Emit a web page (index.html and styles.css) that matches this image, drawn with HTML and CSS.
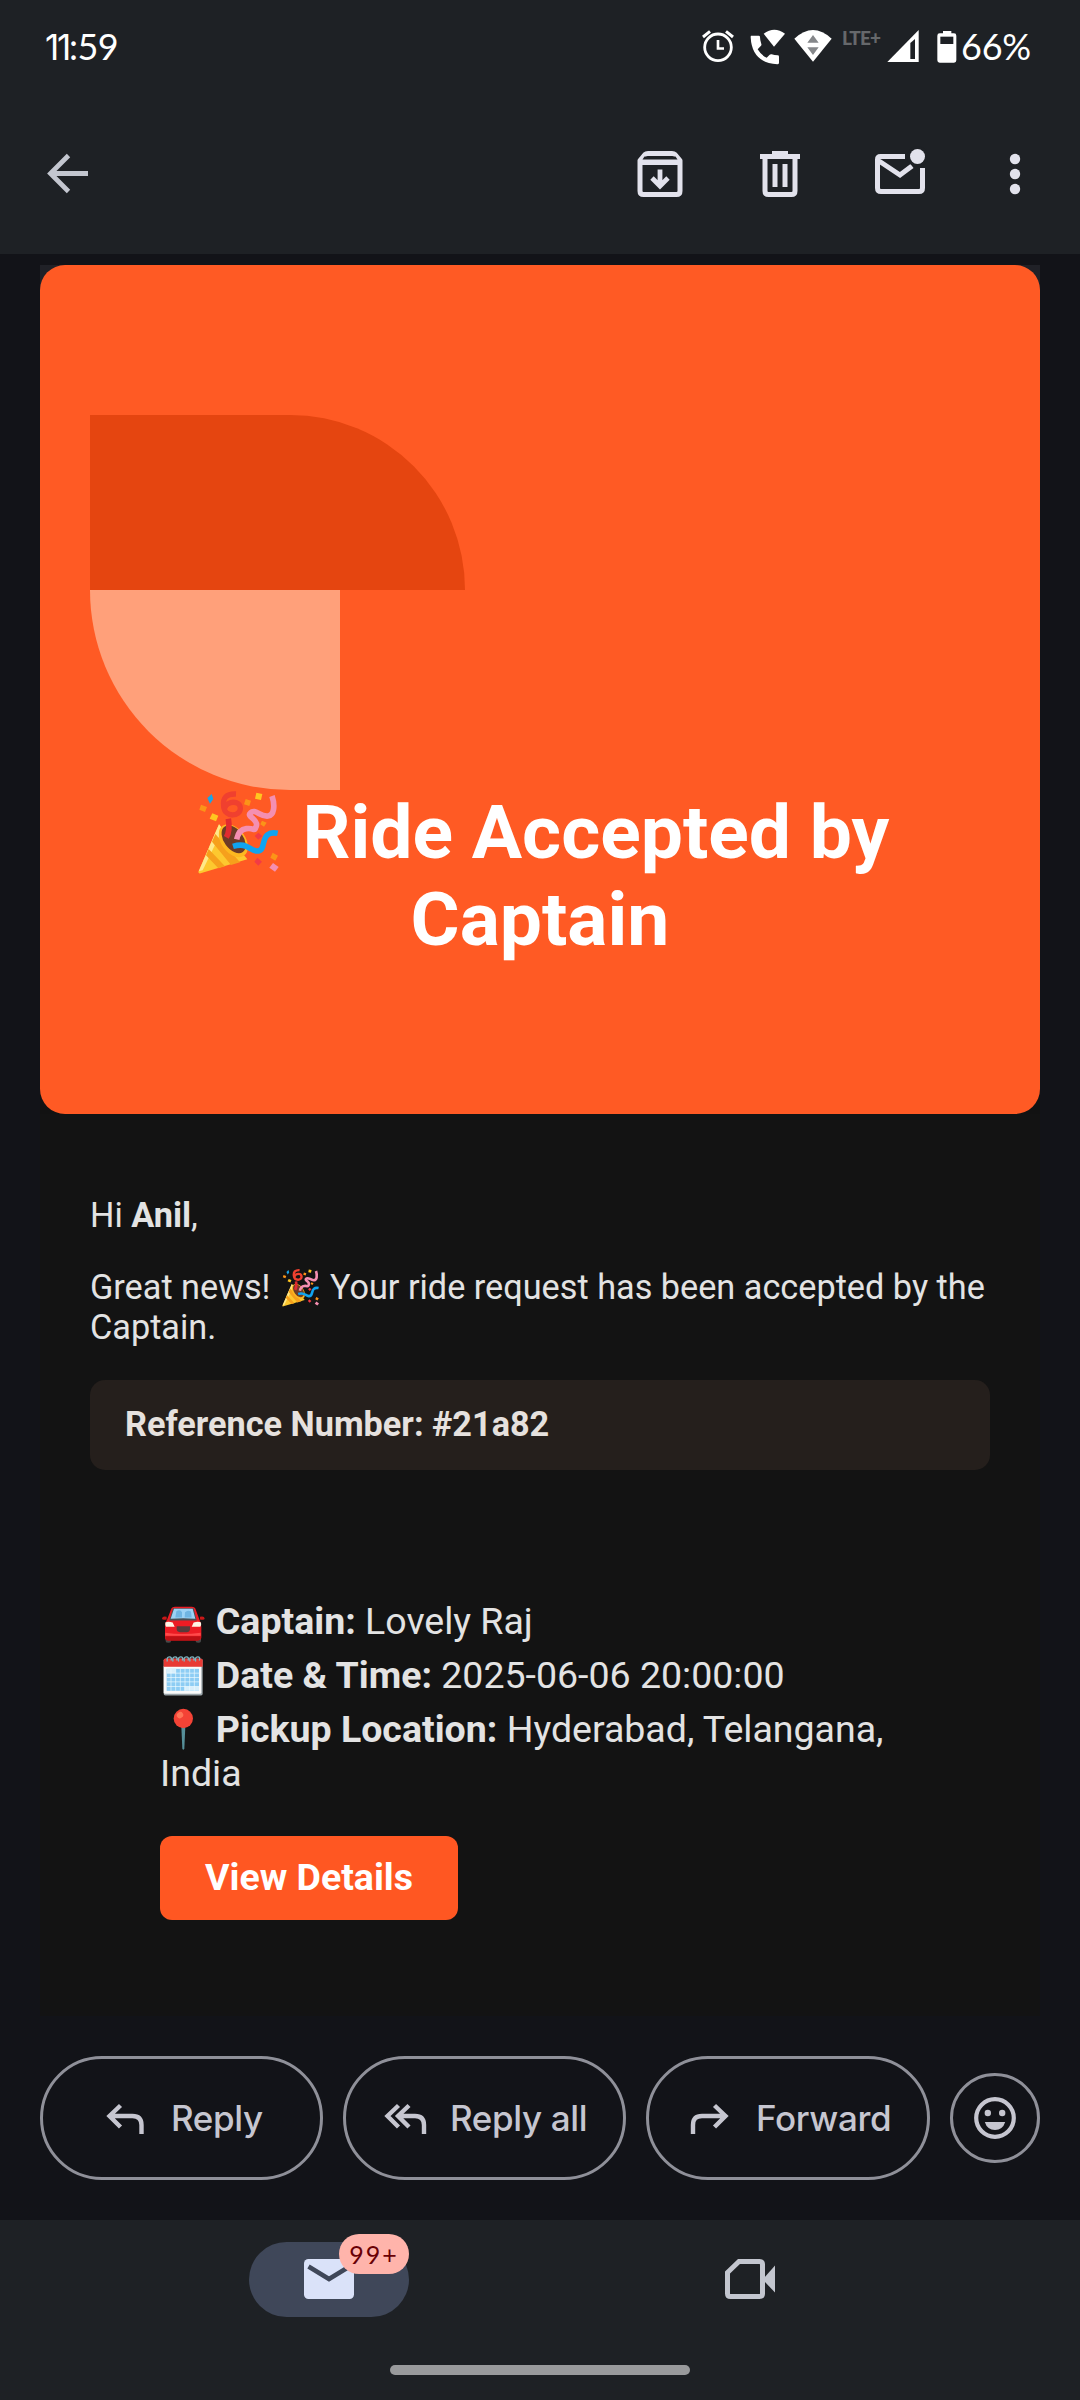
FILE: index.html
```html
<!DOCTYPE html>
<html lang="en">
<head>
<meta charset="utf-8">
<title>Ride Accepted by Captain</title>
<link rel="stylesheet" href="styles.css">
</head>
<body>
<svg class="defs" width="0" height="0" aria-hidden="true">
  <symbol id="party" viewBox="0 15 279 279">
    <path d="M84 133L23 274q-3 8 6 6l140-42z" fill="#fdc82f"/>
    <path d="M84 133L23 274l12-3 60-124z" fill="#ffe88a"/>
    <path d="M73 162l-10 23 57 70 27-8zM53 207l-8 19 37 39 20-6z" fill="#f6a01c"/>
    <ellipse cx="127" cy="182" rx="36" ry="55" transform="rotate(-36 127 182)" fill="#fdb820"/>
    <ellipse cx="128" cy="178" rx="29" ry="47" transform="rotate(-36 128 178)" fill="#6d3b26"/>
    <path d="M106 172q12-20 6-56" fill="none" stroke="#e02b30" stroke-width="17"/>
    <path d="M135 42q-43-2-37 38c4 35 51 30 50 4-1-24-39-22-47 0" fill="none" stroke="#f0402f" stroke-width="16"/>
    <path d="M137 178q6-29 29-32c27-3 23 11 30-8 7-20-30-28-18-39 15-15 29 12 53 9 18-2 22-30 12-60" fill="none" stroke="#f48fb1" stroke-width="17"/>
    <path d="M126 199c42-13 47 11 70 14 28 2 15-35 34-49q11-8 30-4" fill="none" stroke="#10a4f0" stroke-width="17"/>
    <path d="M49 54l13-12 5 15-10 14z" fill="#1aa5e8"/>
    <g fill="#ffc620"><path d="M64 100l18 7-7 17-19-8zM196 38l18 4-4 18-18-4z"/></g>
    <g fill="#fb9418"><path d="M30 74l18 7-6 15-17-7zM164 57l16 5-5 16-16-5zM213 122l14 6-8 12-11-7zM245 218l16 9-8 15-15-9z"/></g>
    <g fill="#f23b45"><path d="M202 158l12 10-12 11-11-11zM199 233l14 12-11 12-12-12z"/></g>
    <path d="M246 249l17 12-11 14-17-12z" fill="#f48fb1"/>
  </symbol>
  <symbol id="car" viewBox="15 21.5 139.5 139.5">
    <path d="M31 139h17v12q0 5-8 5t-8-5zM121 139h17v12q-1 5-8 5t-8-5z" fill="#484848"/>
    <path d="M21 83q1-8 14-5v8q-14 3-14-3zM149 83q-1-8-14-5v8q14 3 14-3z" fill="#c91818"/>
    <path d="M48 56q2-8 12-8h50q10 0 12 8l12 32q5 7 5 21v30q0 9-10 9H39q-9 0-9-9v-31q0-14 6-21z" fill="#ec1c24"/>
    <path d="M54 52h62l9 37H43z" fill="#4a5156"/>
    <path d="M57 54h56l8 30q-36-4-74 0z" fill="#9bd2f5"/>
    <path d="M64 61q12-6 17 3v16H61zM90 64q8-8 18-2l2 18H89z" fill="#6fb5e2"/>
    <path d="M31 95q8-5 22 0l6 13H33q-3-2-2-13zM138 95q-8-5-22 0l-6 13h26q4-3 2-13z" fill="#fff4e4"/>
    <path d="M65 106h40v9q-1 9-10 9H75q-10 0-10-10z" fill="#573b3b"/>
    <path d="M31 126q50 7 106 0v9H31z" fill="#ff4a4a"/>
    <path d="M31 136h106v8q-4 6-9 6H40q-8 0-9-6z" fill="#bd1015"/>
  </symbol>
  <symbol id="calendar" viewBox="15 183.5 139.5 139.5">
    <rect x="26" y="204" width="117" height="110" rx="5" fill="#9ba5aa"/>
    <path d="M26 226h113v78q0 5-5 5H31q-5 0-5-5z" fill="#fafafa"/>
    <path d="M26 228v-20q0-5 5-5h106q6 0 6 5v20z" fill="#e83a34"/>
    <rect x="35" y="234" width="97" height="66" fill="#8dcdf4"/>
    <path d="M35 234h27v13H35zM88 287h44v13H88z" fill="#d8effb"/>
    <path d="M48 234v66M62 234v66M76 234v66M90 234v66M104 234v66M118 234v66M35 247h97M35 260h97M35 273h97M35 287h97" stroke="#eefaff" stroke-width="2"/>
    <path d="M37 212q-3-14 6-14t5 11M54 212q-3-14 6-14t5 11M71 212q-3-14 6-14t5 11M88 212q-3-14 6-14t5 11M105 212q-3-14 6-14t5 11M122 212q-3-14 6-14t5 11" fill="none" stroke="#7fb5c2" stroke-width="4"/>
  </symbol>
  <symbol id="pin" viewBox="15 346.5 139.5 139.5">
    <path d="M79 408h12l-3 66q-3 8-6 0z" fill="#568f99"/>
    <circle cx="85" cy="384" r="29" fill="#f44336"/>
    <ellipse cx="75" cy="374" rx="10" ry="9" transform="rotate(-35 75 374)" fill="#ff7558"/>
  </symbol>
</svg>

<header class="top">
  <div class="status">
    <span class="clock"><span class="hour">11</span>:59</span>
    <div class="indicators">
      <svg width="32" height="36" viewBox="36 27 96 108" fill="none" stroke="#fff">
        <circle cx="84" cy="82" r="40" stroke-width="8.500"/><path d="M84 60v25.500h18" stroke-width="8"/><path d="M39 51l21-17M129 51l-21-17" stroke-width="9"/>
      </svg>
      <svg class="call" width="36" height="36" viewBox="180 27 108 108" fill="#fff">
        <path d="M183 47h23q4 0 4 4 0 10 4 21 1 3-1 5l-10 11q10 17 27 25l9-9q3-2 6-1 8 3 18 3 4 0 4 4v18q0 5-5 5-76-4-80-81 0-5 1-5z"/><path d="M221 41q32-24 64 0l-33 39z"/>
      </svg>
      <svg class="wifi" width="38" height="36" viewBox="312 27 114 108">
        <path d="M313 56q56-52 112 0l-56 69z" fill="#fff"/><path d="M352 68l17-23 17 23zM352 82h34l-17 23z" fill="#85878a"/>
      </svg>
      <span class="lte">LTE+</span>
      <svg width="32" height="36" viewBox="592 27 96 108">
        <path d="M593 126l94-96v96z" fill="#fff"/><path d="M662 69l14-12v60h-14z" fill="#1e2125"/>
      </svg>
      <svg class="battery" width="20" height="36" viewBox="740 27 60 108">
        <path d="M758 33h25v7h8q7 0 7 7v74q0 7-7 7h-43q-7 0-7-7V47q0-7 7-7h10z" fill="#fff"/><path d="M750 50h39v22h-39z" fill="#1e2125"/>
      </svg>
      <span class="percent">66%</span>
    </div>
  </div>
  <div class="toolbar">
    <svg width="60" height="60" viewBox="0 0 60 60" fill="none" stroke="#c3c6cf" stroke-width="4.800"><path d="M30.500 11.500L12.500 29.500l18 18M13 29.500H50"/></svg>
    <div class="actions">
      <svg width="60" height="60" viewBox="0 0 60 60">
        <path d="M10 16.500V47q0 3.500 3.500 3.500h33q3.500 0 3.500-3.500V16.500l-5-6q-1-1-3-1H18q-2 0-3 1z" fill="none" stroke="#e2e2ec" stroke-width="5" stroke-linejoin="round"/><path d="M10 15h40v6H10z" fill="#e2e2ec"/><path d="M14.500 12.500h31l2 3h-35z" fill="#1e2125"/><path d="M30 25.500v15M22 34l8 8 8-8" fill="none" stroke="#e2e2ec" stroke-width="4.800"/>
      </svg>
      <svg width="60" height="60" viewBox="0 0 60 60" fill="none" stroke="#e2e2ec" stroke-width="5">
        <path d="M10 12.500h40M22 9.500h16M15 14v33q0 3.500 3.500 3.500h23q3.500 0 3.500-3.500V14M25 20v23M35 20v23"/>
      </svg>
      <svg width="60" height="60" viewBox="0 0 60 60">
        <path d="M35 12.500H10.500q-3 0-3 3V44q0 3.500 3.500 3.500h38q3.500 0 3.500-3.500V24" fill="none" stroke="#e2e2ec" stroke-width="5"/><path d="M9 17l21 14 12-9" fill="none" stroke="#e2e2ec" stroke-width="5"/><circle cx="47.500" cy="12.500" r="10.500" fill="#1e2125"/><circle cx="47.500" cy="12.500" r="7.500" fill="#e2e2ec"/>
      </svg>
      <svg class="more" width="30" height="60" viewBox="0 0 30 60" fill="#e2e2ec"><circle cx="15" cy="15" r="5.200"/><circle cx="15" cy="30" r="5.200"/><circle cx="15" cy="45" r="5.200"/></svg>
    </div>
  </div>
</header>

<main class="mail">
  <section class="hero-wrap">
    <div class="hero">
      <div class="shape-dark"></div>
      <div class="shape-light"></div>
      <h1><svg class="emoji"><use href="#party"/></svg> Ride Accepted by<br>Captain</h1>
    </div>
  </section>
  <section class="message">
    <p>Hi <b>Anil</b>,</p>
    <p>Great news! <svg class="emoji"><use href="#party"/></svg> Your ride request has been accepted by the Captain.</p>
    <div class="reference">Reference Number: #21a82</div>
    <div class="details">
      <p><svg class="emoji"><use href="#car"/></svg> <b>Captain:</b> Lovely Raj</p>
      <p><svg class="emoji"><use href="#calendar"/></svg> <b>Date &amp; Time:</b> 2025-06-06 20:00:00</p>
      <p><svg class="emoji"><use href="#pin"/></svg> <b>Pickup Location:</b> Hyderabad, Telangana,<br>India</p>
      <a class="view">View Details</a>
    </div>
  </section>
</main>

<div class="replies">
  <button class="pill reply">
    <svg width="40" height="32" viewBox="0 0 40 32"><path d="M16.500 3.500L5.500 14l11 11M6 14h22.500q9 0 9 9v9.500"/></svg><span>Reply</span>
  </button>
  <button class="pill reply-all">
    <svg width="46" height="32" viewBox="0 0 46 32"><path d="M16.500 3.500L5.500 14l11 11M27 3.500L16 14l11 11M16.500 14H33q9 0 9 9v9.500"/></svg><span>Reply all</span>
  </button>
  <button class="pill forward">
    <svg width="42" height="32" viewBox="0 0 42 32"><path d="M25.500 3.500l11 10.500-11 11M36 14H13q-9 0-9 9v9.500"/></svg><span>Forward</span>
  </button>
  <button class="react">
    <svg width="44" height="44" viewBox="0 0 44 44"><circle cx="22" cy="22" r="18.800" fill="none" stroke="#c6c6d0" stroke-width="4.200"/><circle cx="14.800" cy="17" r="3.200"/><circle cx="29.200" cy="17" r="3.200"/><path d="M11.800 26h20.400q-2.500 8-10.200 8t-10.200-8z"/></svg>
  </button>
</div>

<nav class="bottom">
  <div class="tabs">
    <div class="tab active">
      <svg width="50" height="40" viewBox="0 0 50 40"><rect width="50" height="40" rx="4.500" fill="#dae2f9"/><path d="M4.500 7.500L25 20 45.500 7.500" fill="none" stroke="#3f4759" stroke-width="4.500"/></svg>
      <span class="badge">99+</span>
    </div>
    <div class="tab">
      <svg width="50" height="40" viewBox="0 0 50 40"><path d="M14 2.500h20.500q3 0 3 3v29q0 3-3 3h-29q-3 0-3-3V13.500z" fill="none" stroke="#c3c6cf" stroke-width="5"/><path d="M39 19L50 6.500v27L39 22z" fill="#c3c6cf"/></svg>
    </div>
  </div>
  <div class="home-bar"></div>
</nav>
</body>
</html>
```
FILE: styles.css
```css
* { box-sizing: border-box; }
body {
  margin: 0;
  width: 1080px;
  height: 2400px;
  background: #121318;
  font-family: Roboto, "Liberation Sans", sans-serif;
  display: flex;
  flex-direction: column;
  overflow: hidden;
}
svg { display: block; flex: none; }
.defs { position: absolute; }
p, h1 { margin: 0; }

.top { height: 254px; background: #1e2125; }
.status {
  display: flex;
  justify-content: space-between;
  height: 94px;
  padding: 29px 40px 0 45px;
  color: #fff;
  font-family: Lato, sans-serif;
}
.clock { font-size: 36px; line-height: 34px; letter-spacing: -0.6px; }
.hour { font-family: Inter, sans-serif; font-size: 35px; letter-spacing: -2.200px; }
.indicators { display: flex; }
.call { margin-left: 16px; }
.wifi { margin-left: 8px; }
.lte {
  width: 45px;
  margin-left: 10px;
  color: #66686b;
  font: 900 19px/17px Lato, sans-serif;
  letter-spacing: -0.9px;
}
.battery { margin-left: 18px; }
.percent { width: 83px; padding-left: 4px; font-size: 36px; line-height: 34px; letter-spacing: -0.2px; }
.toolbar {
  display: flex;
  justify-content: space-between;
  padding: 50px 50px 0 38px;
}
.actions { display: flex; gap: 60px; }
.more { margin-left: 10px; }

.mail { margin: 11px 40px 0; height: 1751px; background: #131313; }
.hero-wrap { background: linear-gradient(#202127 50%, #121212 50%); }
.hero {
  height: 849px;
  padding: 150px 50px 0;
  border-radius: 25px;
  background: #ff5a24;
}
.shape-dark { width: 375px; height: 175px; background: #e54510; border-top-right-radius: 175px; }
.shape-light { width: 250px; height: 200px; background: #ffa07a; border-bottom-left-radius: 200px; }
h1 {
  position: relative;
  margin-top: -1px;
  color: #fff;
  font-size: 75px;
  line-height: 87px;
  font-weight: 700;
  text-align: center;
}
.emoji {
  display: inline-block;
  width: 1.24em;
  height: 1.24em;
  margin-top: -0.4em;
  margin-bottom: -0.15em;
  vertical-align: -0.117em;
}
.message { padding: 81px 50px 0; color: #e3e3e3; font-size: 34.250px; line-height: 40px; }
.message > p + p { margin-top: 32px; }
.reference {
  height: 90px;
  margin-top: 33px;
  padding: 24px 35px;
  border-radius: 15px;
  background: #251f1c;
  color: #e6e1de;
  font-weight: 700;
}
.details { margin-top: 129px; padding: 0 70px; font-size: 37.500px; line-height: 44px; }
.details p + p { margin-top: 10px; }
.view {
  display: block;
  width: 298px;
  height: 84px;
  margin-top: 41px;
  border-radius: 12px;
  background: #ff5722;
  color: #fff;
  font-weight: 700;
  line-height: 82px;
  text-align: center;
}

.replies {
  display: grid;
  grid-template-columns: 283px 283px 284px 90px;
  align-items: center;
  gap: 20px;
  height: 124px;
  margin: 40px 40px;
}
button {
  margin: 0;
  padding: 0;
  border: 3px solid #8f9099;
  background: none;
  color: #c6c6d0;
  font: 500 35px/40px Inter, sans-serif;
  letter-spacing: -0.35px;
}
.pill {
  display: flex;
  align-items: center;
  height: 124px;
  border-radius: 62px;
  white-space: nowrap;
}
.pill path { fill: none; stroke: #c6c6d0; stroke-width: 4.400; }
.pill span { margin-top: -1px; }
.reply { padding-left: 61px; gap: 27px; }
.reply-all { padding-left: 36px; gap: 22px; }
.forward { padding-left: 40px; gap: 25px; }
.react {
  display: flex;
  align-items: center;
  justify-content: center;
  width: 90px;
  height: 90px;
  border-radius: 50%;
  fill: #c6c6d0;
}

.bottom {
  display: flex;
  flex-direction: column;
  align-items: center;
  height: 180px;
  background: #1e2125;
}
.tabs { display: flex; gap: 261px; padding: 22px 1px 48px 0; }
.tab {
  position: relative;
  display: flex;
  align-items: center;
  justify-content: center;
  width: 160px;
  height: 75px;
}
.tab > svg { margin-top: -1px; }
.active { border-radius: 38px; background: #3f4759; }
.badge {
  position: absolute;
  top: -8px;
  right: 0;
  width: 70px;
  height: 40px;
  border-radius: 20px;
  background: #ffb4ab;
  color: #690005;
  font: 400 25px/40px Lato, sans-serif;
  letter-spacing: 2px;
  text-align: center;
}
.home-bar { width: 300px; height: 10px; border-radius: 5px; background: #999a9c; }
```
